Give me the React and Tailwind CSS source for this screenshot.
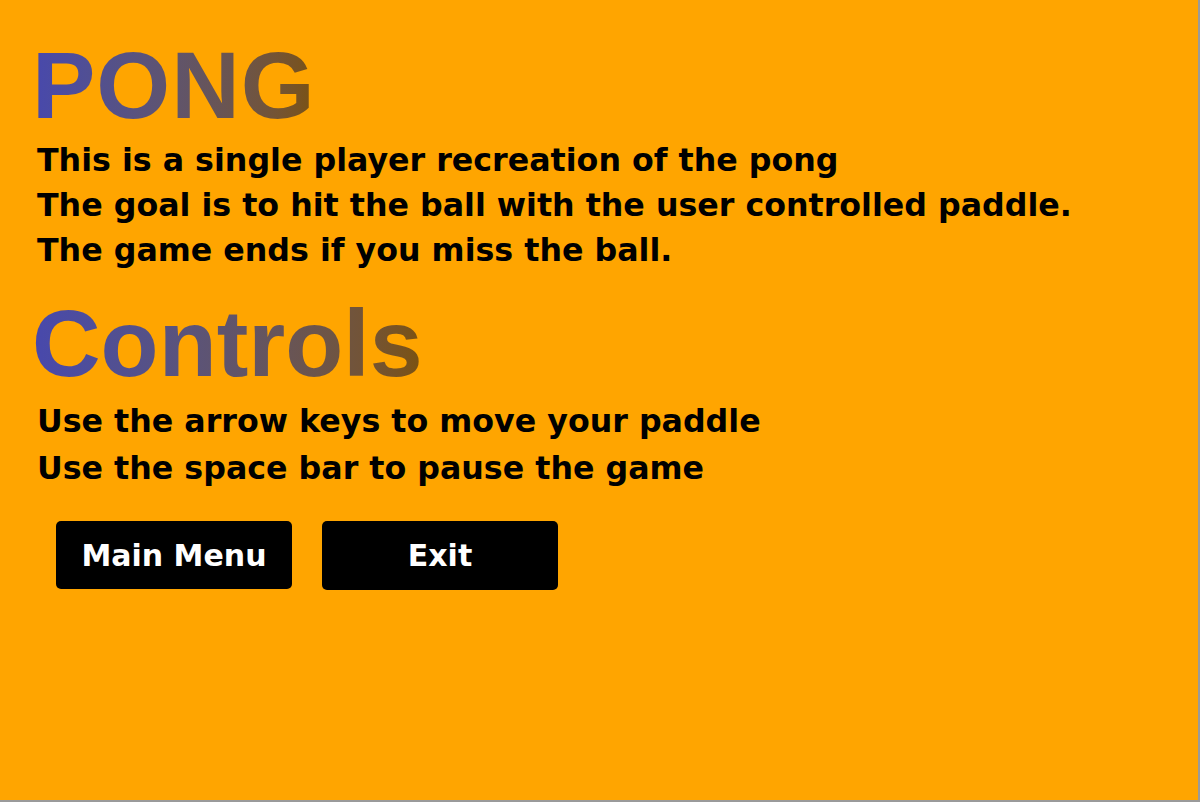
import React from "react";

const titleClass =
  "inline-block bg-gradient-to-r from-[#4848ad] to-[#7b520c] bg-clip-text text-transparent font-bold leading-none font-['Liberation_Sans',Arial,sans-serif]";

const App = () => {
  return (
    <div className="w-[1200px] h-[802px] bg-[#ffa500] border-r-2 border-b-2 border-[#9a9a9a] font-['DejaVu_Sans',Verdana,sans-serif] overflow-hidden">
      <div className="pl-[32px] pt-[38px]">
        <h1 className={titleClass + " text-[95px] tracking-[1px]"}>PONG</h1>
        <div className="mt-[5px] pl-[5px] text-[31.7px] leading-[45px] font-bold text-black">
          <p>This is a single player recreation of the pong</p>
          <p>The goal is to hit the ball with the user controlled paddle.</p>
          <p>The game ends if you miss the ball.</p>
        </div>
        <h2 className={titleClass + " mt-[23px] text-[95px]"}>Controls</h2>
        <div className="mt-[7px] pl-[5px] text-[31.7px] leading-[47px] font-bold text-black">
          <p>Use the arrow keys to move your paddle</p>
          <p>Use the space bar to pause the game</p>
        </div>
        <div className="mt-[29px] ml-[24px] flex gap-[30px]">
          <button className="w-[236px] h-[68px] bg-black text-white rounded-[5px] text-[30px] font-bold">
            Main Menu
          </button>
          <button className="w-[236px] h-[69px] bg-black text-white rounded-[5px] text-[30px] font-bold">
            Exit
          </button>
        </div>
      </div>
    </div>
  );
};

export default App;
